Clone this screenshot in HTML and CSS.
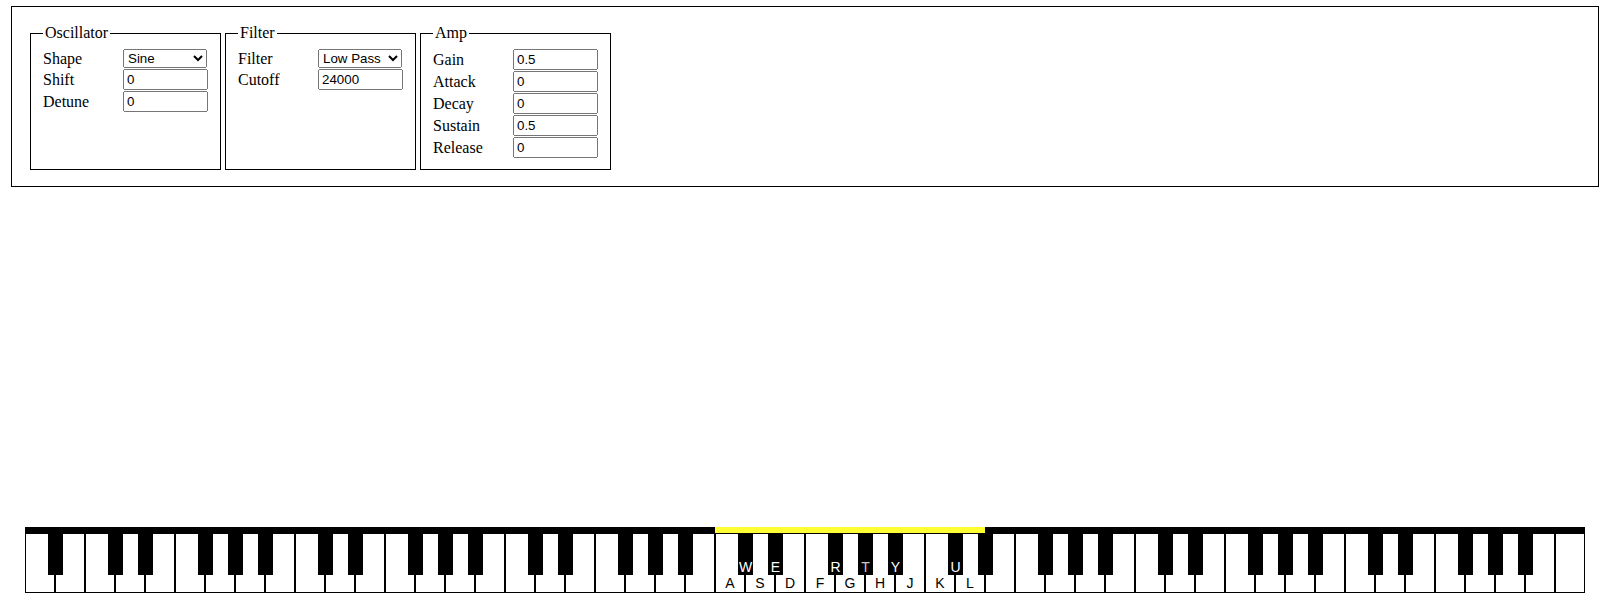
FILE: index.html
```html
<!DOCTYPE html>
<html lang="en">

<head>
    <meta charset="UTF-8">
    <meta name="viewport" content="width=device-width, initial-scale=1.0">
    <title>Synth</title>
    <link rel="stylesheet" href="styles.css">
</head>

<body>

    <div class="controls">
        <fieldset>
            <legend>Oscillator</legend>
            <div class="params">
                <label>Shape</label>
                <select>
                    <option>Sine</option>
                    <option>Square</option>
                    <option>Sawtooth</option>
                    <option>Triangle</option>
                </select>
                <label>Shift</label>
                <input type="text" value="0">
                <label>Detune</label>
                <input type="text" value="0">
            </div>
        </fieldset>
        <fieldset>
            <legend>Filter</legend>
            <div class="params">
                <label>Filter</label>
                <select>
                    <option>Low Pass</option>
                    <option>High Pass</option>
                    <option>Band Pass</option>
                </select>
                <label>Cutoff</label>
                <input type="text" value="24000">
            </div>
        </fieldset>
        <fieldset>
            <legend>Amp</legend>
            <div class="params">
                <label>Gain</label>
                <input type="text" value="0.5">
                <label>Attack</label>
                <input type="text" value="0">
                <label>Decay</label>
                <input type="text" value="0">
                <label>Sustain</label>
                <input type="text" value="0.5">
                <label>Release</label>
                <input type="text" value="0">
            </div>
        </fieldset>
    </div>

    <div class="keyboard" id="keyboard">
        <div class="range"></div>
    </div>

    <script>
        // Computer keys mapped onto the piano
        const keyMap = {
            'C4': 'A', 'C#4': 'W', 'D4': 'S', 'D#4': 'E', 'E4': 'D',
            'F4': 'F', 'F#4': 'R', 'G4': 'G', 'G#4': 'T', 'A4': 'H',
            'A#4': 'Y', 'B4': 'J', 'C5': 'K', 'C#5': 'U', 'D5': 'L'
        };

        function buildKeyboard() {
            let keyboard = document.getElementById('keyboard');
            let names = ['A', 'B', 'C', 'D', 'E', 'F', 'G'];

            for (let i = 0; i < 52; i++) {
                let name = names[i % 7];
                let octave = Math.floor((i + 5) / 7);
                let white = document.createElement('div');
                white.className = 'white';
                addLabel(white, keyMap[name + octave]);

                if ('ACDFG'.includes(name) && i < 51) {
                    let black = document.createElement('div');
                    black.className = 'black';
                    addLabel(black, keyMap[name + '#' + octave]);
                    white.appendChild(black);
                }
                keyboard.appendChild(white);
            }
        }

        function addLabel(key, text) {
            if (!text) return;
            let label = document.createElement('span');
            label.className = 'label';
            if (text === 'T') label.className += ' dim';
            label.textContent = text;
            key.appendChild(label);
        }

        buildKeyboard();
    </script>

</body>

</html>
```

FILE: styles.css
```css
/* General Styles */

html,
body {
    height: 100%;
}

body {
    margin: 0;
    font-family: "Liberation Serif", "Times New Roman", serif;
    font-size: 16px;
    display: flex;
    flex-direction: column;
    background-color: #fff;
    color: #000;
}

/* Synth controls */

.controls {
    margin: 6px 11px 0;
    border: 1px solid #000;
    padding: 17px 18px 16px;
    display: flex;
    gap: 4px;
}

fieldset {
    box-sizing: border-box;
    width: 191px;
    min-width: 0;
    margin: 0;
    border: 1px solid #000;
    padding: 7px 12px 11px;
}

legend {
    padding: 0 2px;
}

.params {
    display: grid;
    grid-template-columns: 80px 85px;
    row-gap: 1px;
    align-items: center;
}

input,
select {
    font: 13.33px "Liberation Sans", Arial, sans-serif;
    box-sizing: border-box;
    width: 85px;
    height: 21px;
    margin: 0;
}

select {
    width: 84px;
    height: 19px;
}

/* Keyboard */

.keyboard {
    margin-top: auto;
    align-self: center;
    width: 1560px;
    border-top: 6px solid #000;
    display: flex;
    position: relative;
}

.range {
    position: absolute;
    top: -6px;
    left: 690px;
    width: 270px;
    height: 6px;
    background-color: #ffff33;
}

.white {
    position: relative;
    box-sizing: border-box;
    width: 30px;
    height: 60px;
    border: 1px solid #000;
    background-color: #fff;
}

.black {
    position: absolute;
    z-index: 1;
    top: -1px;
    left: 22px;
    width: 15px;
    height: 42px;
    background-color: #000;
}

.label {
    position: absolute;
    left: 0;
    right: 0;
    bottom: 2px;
    text-align: center;
    font: 14px/14px "Liberation Sans", Arial, sans-serif;
    color: #000;
}

.black .label {
    bottom: 1px;
    color: #fff;
}

.black .label.dim {
    color: #ccc;
}
```
